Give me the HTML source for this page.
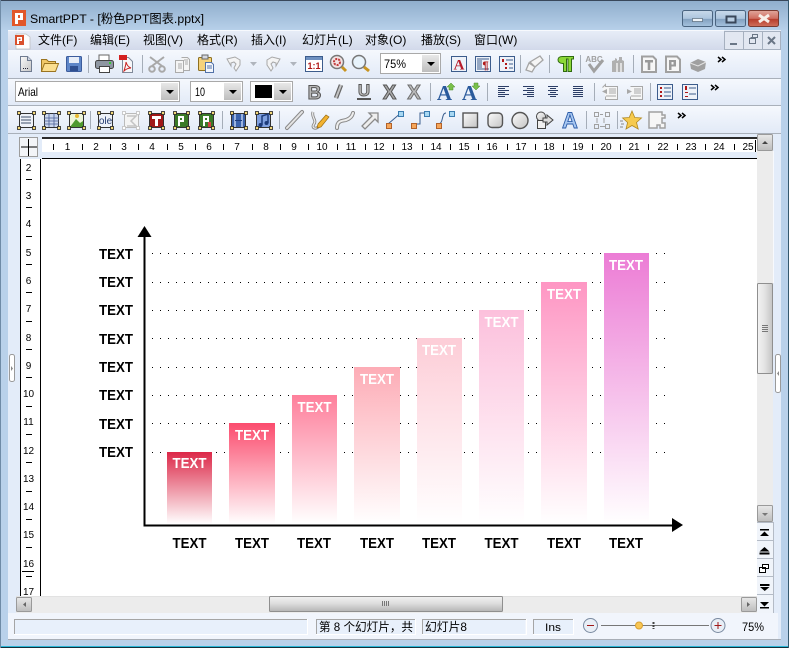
<!DOCTYPE html>
<html><head><meta charset="utf-8"><title>SmartPPT</title>
<style>
html,body{margin:0;padding:0;background:#b9d1ea;overflow:hidden}
svg{display:block}
text{font-family:"Liberation Sans","Noto Sans CJK SC",sans-serif;fill:#000}
.m{font-size:12px}
.r{font-size:10px;text-anchor:middle}
.t{font-size:14.4px;font-weight:bold;text-anchor:middle}
.w{fill:#fff}
</style></head><body>
<svg width="789" height="648" viewBox="0 0 789 648" xmlns="http://www.w3.org/2000/svg">
<defs>
<linearGradient id="tb" x1="0" y1="0" x2="0" y2="1"><stop offset="0" stop-color="#8fadcb"/><stop offset="1" stop-color="#b7d0e9"/></linearGradient>
<linearGradient id="mn" x1="0" y1="0" x2="0" y2="1"><stop offset="0" stop-color="#e8eef8"/><stop offset="1" stop-color="#d2d9ea"/></linearGradient>
<linearGradient id="tl" x1="0" y1="0" x2="0" y2="1"><stop offset="0" stop-color="#f5f8fd"/><stop offset="1" stop-color="#e2eaf7"/></linearGradient>
<linearGradient id="wb" x1="0" y1="0" x2="0" y2="1"><stop offset="0" stop-color="#c8d9ea"/><stop offset=".5" stop-color="#adc5de"/><stop offset=".55" stop-color="#83a1c0"/><stop offset="1" stop-color="#a6c3df"/></linearGradient>
<linearGradient id="wc" x1="0" y1="0" x2="0" y2="1"><stop offset="0" stop-color="#e0a79c"/><stop offset=".5" stop-color="#cf6d5f"/><stop offset=".55" stop-color="#b73d2c"/><stop offset="1" stop-color="#d0705c"/></linearGradient>
<linearGradient id="cb" x1="0" y1="0" x2="0" y2="1"><stop offset="0" stop-color="#e8e8e8"/><stop offset="1" stop-color="#bdbdbd"/></linearGradient>
<linearGradient id="gs" x1="0" y1="0" x2="1" y2="1"><stop offset="0" stop-color="#fbfbfb"/><stop offset="1" stop-color="#c4c4c4"/></linearGradient>
<linearGradient id="th" x1="0" y1="0" x2="1" y2="0"><stop offset="0" stop-color="#f3f3f3"/><stop offset=".5" stop-color="#e2e2e2"/><stop offset="1" stop-color="#c4c4c4"/></linearGradient>
<linearGradient id="hh" x1="0" y1="0" x2="0" y2="1"><stop offset="0" stop-color="#f2f2f2"/><stop offset=".45" stop-color="#dedede"/><stop offset="1" stop-color="#b5b5b5"/></linearGradient>
<linearGradient id="b1" x1="0" y1="0" x2="0" y2="1"><stop offset="0" stop-color="#dc2848"/><stop offset="1" stop-color="#fff"/></linearGradient>
<linearGradient id="b2" x1="0" y1="0" x2="0" y2="1"><stop offset="0" stop-color="#fb4c6e"/><stop offset="1" stop-color="#fff"/></linearGradient>
<linearGradient id="b3" x1="0" y1="0" x2="0" y2="1"><stop offset="0" stop-color="#fe7f9b"/><stop offset="1" stop-color="#fff"/></linearGradient>
<linearGradient id="b4" x1="0" y1="0" x2="0" y2="1"><stop offset="0" stop-color="#fdacb6"/><stop offset="1" stop-color="#fff"/></linearGradient>
<linearGradient id="b5" x1="0" y1="0" x2="0" y2="1"><stop offset="0" stop-color="#fdcdd7"/><stop offset="1" stop-color="#fff"/></linearGradient>
<linearGradient id="b6" x1="0" y1="0" x2="0" y2="1"><stop offset="0" stop-color="#fcc0dc"/><stop offset="1" stop-color="#fff"/></linearGradient>
<linearGradient id="b7" x1="0" y1="0" x2="0" y2="1"><stop offset="0" stop-color="#fe96c3"/><stop offset="1" stop-color="#fff"/></linearGradient>
<linearGradient id="b8" x1="0" y1="0" x2="0" y2="1"><stop offset="0" stop-color="#ec7cd5"/><stop offset="1" stop-color="#fff"/></linearGradient>
</defs>

<!-- window frame -->
<rect width="789" height="648" fill="#b9d1ea"/>
<rect width="789" height="30" fill="url(#tb)"/>
<rect width="789" height="1" fill="#39475a"/>
<rect y="646" width="789" height="1" fill="#29b6d6"/>
<rect y="647" width="789" height="1" fill="#12303c"/>
<rect x="788" width="1" height="648" fill="#34586e"/>
<rect x="0" width="1" height="648" fill="#6f8ba6"/>
<rect x="8" y="30" width="773" height="610" fill="#e3ecf9"/>

<!-- title -->
<rect x="12" y="10" width="14" height="16" fill="#e1572a"/>
<path d="M15 13h8v7h-5v4h-3zM18 15v3h2v-3z" fill="#fff" fill-rule="evenodd"/>
<text x="30" y="23" style="font-size:12.3px" fill="#111">SmartPPT - [粉色PPT图表.pptx]</text>
<g stroke="#4a6480">
<rect x="682.500" y="10.500" width="30" height="16" rx="2" fill="url(#wb)"/>
<rect x="715.500" y="10.500" width="30" height="16" rx="2" fill="url(#wb)"/>
<rect x="748.500" y="10.500" width="30" height="16" rx="2" fill="url(#wc)" stroke="#7a3a30"/>
</g>
<rect x="692.500" y="18.500" width="10" height="3" fill="#eef3f8" stroke="#4a5a6a" stroke-width=".6"/>
<rect x="726.500" y="16.500" width="9" height="6" fill="#b9cee2" stroke="#39475a" stroke-width="2"/>
<path d="M759 15l10 7M769 15l-10 7" stroke="#f7efe9" stroke-width="3"/>

<!-- menu -->
<rect x="8" y="30" width="773" height="20" fill="url(#mn)"/>
<rect x="8" y="30" width="716" height="1" fill="#f7f9fd"/>
<path d="M16 34h10l4 3v12h-14z" fill="#fdfdfd" stroke="#bbb" stroke-width=".7"/>
<rect x="15" y="35" width="9" height="10" fill="#d9502c"/>
<path d="M17 37h5v4h-3v3h-2zM18.500 38.500v1.500h2v-1.500z" fill="#fff" fill-rule="evenodd"/>
<text class="m" x="38" y="44">文件(F)</text>
<text class="m" x="90" y="44">编辑(E)</text>
<text class="m" x="143" y="44">视图(V)</text>
<text class="m" x="197" y="44">格式(R)</text>
<text class="m" x="251" y="44">插入(I)</text>
<text class="m" x="302" y="44">幻灯片(L)</text>
<text class="m" x="365" y="44">对象(O)</text>
<text class="m" x="421" y="44">播放(S)</text>
<text class="m" x="474" y="44">窗口(W)</text>
<g stroke="#a6b0bf" fill="#e2e7f1">
<rect x="724.500" y="31.500" width="19" height="18"/><rect x="743.500" y="31.500" width="19" height="18"/><rect x="762.500" y="31.500" width="18" height="18"/>
</g>
<path d="M730 44h7" stroke="#6a7686" stroke-width="2"/>
<path d="M750.500 37.500h7v-3h-5v3M749.500 38.500h6v5h-6z" fill="none" stroke="#6a7686"/>
<path d="M768 37l7 7M775 37l-7 7" stroke="#6a7686" stroke-width="2"/>

<!-- toolbars -->
<rect x="8" y="50" width="773" height="28" fill="url(#tl)"/>
<rect x="8" y="78" width="773" height="1" fill="#a9b0ba"/>
<rect x="8" y="79" width="773" height="26" fill="url(#tl)"/>
<rect x="8" y="105" width="773" height="1" fill="#a9b0ba"/>
<rect x="8" y="106" width="773" height="27" fill="url(#tl)"/>
<rect x="8" y="133" width="773" height="1" fill="#a9b0ba"/>

<!-- separators -->
<path d="M88.500 55v18M142.500 55v18M520.500 55v18M549.500 55v18M580.500 55v18M633.500 55v18M430.500 83v18M487.500 83v18M594.500 83v18M650.500 83v18M90.500 111v18M222.500 111v18M279.500 111v18M586.500 111v18M617.500 111v18" stroke="#a5adb8"/>

<!-- toolbar 1 icons -->
<path d="M20.500 56.500h7l4 4v11h-11z" fill="url(#gs)" stroke="#6f7b90"/><path d="M27.500 56.500v4h4" fill="#cfd6e3" stroke="#6f7b90"/><path d="M23 68.500h6" stroke="#223" stroke-dasharray="1 1"/>
<path d="M41.500 71.500v-12h5l2 2h7v2" fill="#f0c868" stroke="#9a7420"/><path d="M41.500 71.500l3-8h14l-3 8z" fill="#fbdf90" stroke="#9a7420"/>
<rect x="66.500" y="56.500" width="15" height="15" rx="1" fill="#5e86c8" stroke="#3c5c9c"/><rect x="69" y="57" width="10" height="6" fill="#e8eef8"/><rect x="70" y="66" width="8" height="5" fill="#2f4f90"/>
<rect x="99" y="55" width="10" height="6" fill="#fff" stroke="#666"/><rect x="95.500" y="60.500" width="18" height="8" rx="2" fill="#8f97a2" stroke="#444"/><rect x="99.500" y="66.500" width="10" height="6" fill="#fff" stroke="#444"/><rect x="109" y="62" width="2" height="2" fill="#3c3"/>
<path d="M122.500 57.500h6l4 4v11h-10z" fill="#f7f7f9" stroke="#808a9a"/><path d="M119 55h8v5h-8z" fill="#d42020"/><path d="M124 71c1-4 2-6 2-9c1 3 2 5 5 6c-3 0-5 1-7 3z" fill="none" stroke="#c82020"/>
<g fill="none" stroke="#a8a8a8" stroke-width="2"><path d="M150 57l12 9M164 57l-12 9"/><circle cx="152" cy="69" r="2.800"/><circle cx="162" cy="69" r="2.800"/></g>
<path d="M181.500 57.500h6l2 2v11h-7" fill="#f4f4f4" stroke="#ababab"/><path d="M175.500 60.500h8v12h-8z" fill="#f4f4f4" stroke="#ababab"/><path d="M178 64h4M178 66h4M178 68h4M184 60h4M185 62h3M185 64h3" stroke="#aaa"/>
<rect x="198.500" y="57.500" width="13" height="13" rx="1" fill="#f5d27c" stroke="#8e7020"/><rect x="202" y="55" width="6" height="4" fill="#d5d8df" stroke="#666"/><path d="M205.500 62.500h6l2 2v8h-8z" fill="#f4f7fc" stroke="#5272a8"/><path d="M207 66h5M207 68h5" stroke="#5272a8"/>
<path d="M227 59l8-2 5 3v5l-4 6-2-3 2-4-2-2-3 1v3z" fill="#f4f4f4" stroke="#a8a8a8"/><path d="M250 62h7l-3.500 4z" fill="#b0b5bd"/>
<path d="M280 59l-8-2-5 3v5l4 6 2-3-2-4 2-2 3 1v3z" fill="#f4f4f4" stroke="#a8a8a8"/><path d="M290 62h7l-3.500 4z" fill="#b0b5bd"/>
<rect x="305.500" y="56.500" width="17" height="15" fill="#fff" stroke="#3c5c8c"/><rect x="306" y="57" width="16" height="3" fill="#6e90c0"/><text x="314" y="69" style="font-size:9px;font-weight:bold;text-anchor:middle;fill:#b01818">1:1</text>
<circle cx="337" cy="62" r="6.500" fill="#f4e4e4" stroke="#777" stroke-width="1.500"/><circle cx="337" cy="62" r="3" fill="none" stroke="#c03a3a" stroke-width="2" stroke-dasharray="2 1"/><path d="M342 67l4 4" stroke="#c89420" stroke-width="3"/>
<circle cx="359" cy="62" r="6.500" fill="#e8f3fb" stroke="#777" stroke-width="1.500"/><path d="M364 67l5 4" stroke="#c89420" stroke-width="3"/>
<rect x="380.500" y="53.500" width="60" height="20" fill="#fff" stroke="#a9a9a9"/><rect x="422" y="55" width="17" height="17" fill="url(#cb)"/><path d="M427 62h8l-4 4z"/>
<text x="384" y="68" textLength="22" lengthAdjust="spacingAndGlyphs" style="font-size:12px">75%</text>
<rect x="451.500" y="56.500" width="15" height="15" fill="#eef2f9" stroke="#3c5c8c"/><text x="459" y="69.500" style="font-size:15px;font-weight:bold;font-family:'Liberation Serif',serif;text-anchor:middle;fill:#b71c2c">A</text>
<rect x="475.500" y="56.500" width="15" height="15" fill="#eef2f9" stroke="#3c5c8c"/><path d="M477 59h12M477 61h5M477 63h5M477 65h5M477 67h5M477 69h12" stroke="#3c5c8c"/><text x="485.500" y="69" style="font-size:11px;font-weight:bold;text-anchor:middle;fill:#b01818">¶</text>
<rect x="499.500" y="56.500" width="15" height="15" fill="#eef2f9" stroke="#3c5c8c"/><path d="M502 59h2v3h-2zM505 63h2v2h-2zM505 67h2v2h-2z" fill="#b01818"/><path d="M506 60h7M509 64h4M509 68h4" stroke="#3c5c8c"/>
<path d="M526 70l3-7 6 4-3 5zM530 62l10-6 3 4-8 7z" fill="#f5f5f5" stroke="#a5a5a5" stroke-width="1.300"/>
<path d="M563.500 71.500V63.500h-1c-3 0-4.500-2-4.500-3.800S559.500 56.500 562.500 56.500h11v2.500h-2v12.500h-3.500V59h-1.500v12.500z" fill="#8cd838" stroke="#2f6a10"/>
<text x="594" y="62" style="font-size:8px;font-weight:bold;text-anchor:middle;fill:#a0a0a0">ABC</text><path d="M589 64l5 7 9-11" fill="none" stroke="#a0a0a0" stroke-width="3"/>
<path d="M612 72v-11l3-1v-2l2 1v2l2-1 0-3 3 0v3l2 1v11z" fill="#b0b0b0"/><path d="M617 63v9M621 63v9" stroke="#fff" stroke-width="1.200"/>
<path d="M642 56.500h11l3 3v12.500h-14z" fill="#f6f6f6" stroke="#a0a0a0" stroke-width="2"/><path d="M645 60h8v2.500h-2.700v7.500h-2.600v-7.500h-2.700z" fill="#999"/>
<path d="M666 56.500h11l3 3v12.500h-14z" fill="#f6f6f6" stroke="#a0a0a0" stroke-width="2"/><path d="M669 60h7v6.500h-4.500v3.500h-2.500zM671.500 62v2.500h2v-2.500z" fill="#999" fill-rule="evenodd"/>
<path d="M690 63l8-4 8 3-1 7-7 3-7-3z" fill="#a0a0a0"/><path d="M690 63l8 3 8-4" fill="none" stroke="#e4e4e4"/>
<path d="M718 57l3 2.500-3 2.500M722 57l3 2.500-3 2.500" fill="none" stroke="#000" stroke-width="1.500"/>

<!-- toolbar 2 -->
<rect x="15.500" y="81.500" width="164" height="20" fill="#fff" stroke="#a9a9a9"/><rect x="161" y="83" width="17" height="17" fill="url(#cb)"/><path d="M166 90h8l-4 4z"/>
<text x="18" y="96" textLength="20" lengthAdjust="spacingAndGlyphs" style="font-size:12px">Arial</text>
<rect x="190.500" y="81.500" width="52" height="20" fill="#fff" stroke="#a9a9a9"/><rect x="224" y="83" width="17" height="17" fill="url(#cb)"/><path d="M229 90h8l-4 4z"/>
<text x="195" y="96" textLength="10" lengthAdjust="spacingAndGlyphs" style="font-size:12px">10</text>
<rect x="250.500" y="81.500" width="42" height="20" fill="#fff" stroke="#a9a9a9"/><rect x="255" y="85" width="17" height="13"/><rect x="274" y="83" width="17" height="17" fill="url(#cb)"/><path d="M279 90h8l-4 4z"/>
<text x="314.500" y="99" style="font-size:19px;font-weight:bold;text-anchor:middle;fill:#b9b9b9;stroke:#555;stroke-width:1">B</text>
<path d="M336 98l5-13" stroke="#666" stroke-width="4.500"/><path d="M336 98l5-13" stroke="#c4c4c4" stroke-width="2"/>
<text x="364" y="96" style="font-size:17px;font-weight:bold;text-anchor:middle;fill:#bbb;stroke:#555;stroke-width:.9">U</text><rect x="357" y="98" width="14" height="2" fill="#555"/>
<text x="389.500" y="99" style="font-size:20px;font-weight:bold;text-anchor:middle;fill:#a8a8a8;stroke:#555;stroke-width:1">X</text>
<text x="414" y="99" style="font-size:20px;font-weight:bold;text-anchor:middle;fill:#bcbcbc;stroke:#6f6f6f;stroke-width:1">X</text>
<text x="444.500" y="100" style="font-size:21px;font-weight:bold;font-family:'Liberation Serif',serif;text-anchor:middle;fill:#2a5a9c">A</text><path d="M449 89v-2h-2l4-4 4 4h-2v3h-4z" fill="#7ac04a" stroke="#4a8a2a" stroke-width=".5"/>
<text x="469.500" y="100" style="font-size:21px;font-weight:bold;font-family:'Liberation Serif',serif;text-anchor:middle;fill:#2a5a9c">A</text><path d="M474 83h4v3h2l-4 4-4-4h2z" fill="#7ac04a" stroke="#4a8a2a" stroke-width=".5"/>
<g stroke="#2c3e66"><path d="M498 86.500h11M498 88.500h7M498 90.500h11M498 92.500h7M498 94.500h11M498 96.500h7"/><path d="M523 86.500h11M527 88.500h7M523 90.500h11M527 92.500h7M523 94.500h11M527 96.500h7"/><path d="M548 86.500h10M550 88.500h6M548 90.500h10M550 92.500h6M548 94.500h10M550 96.500h6"/><path d="M573 86.500h10M573 88.500h10M573 90.500h10M573 92.500h10M573 94.500h10M573 96.500h10"/></g>
<path d="M602.500 87.500l3-3 0 2h12v13h-12v-3" fill="#f6f6f6" stroke="#a8a8a8"/><path d="M607 89l-5 2.500 5 2.500z" fill="#a8a8a8"/><path d="M609 89h7M609 91h7M609 93h7M606 96h10" stroke="#a8a8a8"/>
<path d="M630.500 86.500h12v13h-12v-3" fill="#f6f6f6" stroke="#a8a8a8"/><path d="M627 89l5 2.500-5 2.500z" fill="#a8a8a8"/><path d="M634 89h7M634 91h7M634 93h7M631 96h10" stroke="#a8a8a8"/>
<rect x="657.500" y="84.500" width="15" height="15" fill="#eef2f9" stroke="#3c5c8c"/><path d="M660 87h2v2h-2zM660 91h2v2h-2zM660 95h2v2h-2z" fill="#b01818"/><path d="M664 88h7M664 92h7M664 96h7" stroke="#3c5c8c"/>
<rect x="682.500" y="84.500" width="15" height="15" fill="#eef2f9" stroke="#3c5c8c"/><path d="M685 86h2v4h-2zM685 92h3v1h-3v3h3v1h-3z" fill="#b01818"/><path d="M689 88h7M689 94h7" stroke="#3c5c8c"/>
<path d="M711 85l3 2.500-3 2.500M715 85l3 2.500-3 2.500" fill="none" stroke="#000" stroke-width="1.500"/>

<!-- toolbar 3 -->
<g fill="#fff" stroke="#333">
<rect x="19.500" y="113.500" width="14" height="14" fill="#eef2f9"/>
<rect x="44.500" y="113.500" width="14" height="14" fill="#cad6ec"/>
<rect x="69.500" y="113.500" width="14" height="14" fill="#eef5d8"/>
<rect x="98.500" y="113.500" width="14" height="14" fill="#eef2f9"/>
<rect x="124.500" y="113.500" width="14" height="14" fill="#f4f4f4" stroke="#bbb"/>
<rect x="149.500" y="113.500" width="14" height="14" fill="#a01818"/>
<rect x="174.500" y="113.500" width="14" height="14" fill="#3a7a28"/>
<rect x="199.500" y="113.500" width="14" height="14" fill="#eef2e0"/>
<rect x="231.500" y="113.500" width="14" height="14" fill="#3a62ac"/>
<rect x="256.500" y="113.500" width="14" height="14" fill="#7fa0e0"/>
</g>
<path d="M21 117h10M21 120h10M21 123h10" stroke="#40506c"/>
<path d="M44 118h15M44 121h15M44 124h15M49 113v14M54 113v14" stroke="#4a5f96" stroke-width=".8"/>
<path d="M70 127l6-8 4 4 3-2v6z" fill="#4f9a2e"/><circle cx="77" cy="116" r="2" fill="#e8b830"/>
<text x="105.500" y="124" style="font-size:10px;text-anchor:middle;fill:#223a70">ole</text>
<path d="M127 116h9l-5 5 5 5h-9" fill="none" stroke="#c4c4c4" stroke-width="1.500"/>
<path d="M152 116h9v3h-3v7h-3v-7h-3z" fill="#fff"/>
<path d="M178 116h6v6h-4v4h-2zM180 118v2h2v-2z" fill="#fff" fill-rule="evenodd"/>
<rect x="200" y="114" width="13" height="13" fill="#3a7a28"/><path d="M203 116h6v6h-4v4h-2zM205 118v2h2v-2z" fill="#fff" fill-rule="evenodd"/><rect x="208" y="122" width="3" height="5" fill="#d04040"/>
<path d="M235 114v13M242 114v13" stroke="#bcd0f0" stroke-width="1.500"/><path d="M235 120.500h7" stroke="#1c3a7a"/>
<path d="M262 125v-9l6-2v9" fill="none" stroke="#1c3a7a" stroke-width="1.500"/><circle cx="260.500" cy="125" r="2" fill="#1c3a7a"/><circle cx="266.500" cy="123" r="2" fill="#1c3a7a"/>
<g fill="#f3d878" stroke="#222" stroke-width=".8">
<rect x="17.500" y="111.500" width="3" height="3"/><rect x="32.500" y="111.500" width="3" height="3"/><rect x="17.500" y="126.500" width="3" height="3"/><rect x="32.500" y="126.500" width="3" height="3"/>
<rect x="42.500" y="111.500" width="3" height="3"/><rect x="57.500" y="111.500" width="3" height="3"/><rect x="42.500" y="126.500" width="3" height="3"/><rect x="57.500" y="126.500" width="3" height="3"/>
<rect x="67.500" y="111.500" width="3" height="3"/><rect x="82.500" y="111.500" width="3" height="3"/><rect x="67.500" y="126.500" width="3" height="3"/><rect x="82.500" y="126.500" width="3" height="3"/>
<rect x="97.500" y="111.500" width="3" height="3"/><rect x="110.500" y="111.500" width="3" height="3"/><rect x="97.500" y="126.500" width="3" height="3"/><rect x="110.500" y="126.500" width="3" height="3"/>
<rect x="148.500" y="111.500" width="3" height="3"/><rect x="161.500" y="111.500" width="3" height="3"/><rect x="148.500" y="126.500" width="3" height="3"/><rect x="161.500" y="126.500" width="3" height="3"/>
<rect x="173.500" y="111.500" width="3" height="3"/><rect x="186.500" y="111.500" width="3" height="3"/><rect x="173.500" y="126.500" width="3" height="3"/><rect x="186.500" y="126.500" width="3" height="3"/>
<rect x="198.500" y="111.500" width="3" height="3"/><rect x="211.500" y="111.500" width="3" height="3"/><rect x="198.500" y="126.500" width="3" height="3"/><rect x="211.500" y="126.500" width="3" height="3"/>
<rect x="230.500" y="111.500" width="3" height="3"/><rect x="244.500" y="111.500" width="3" height="3"/><rect x="230.500" y="126.500" width="3" height="3"/><rect x="244.500" y="126.500" width="3" height="3"/>
<rect x="255.500" y="111.500" width="3" height="3"/><rect x="269.500" y="111.500" width="3" height="3"/><rect x="255.500" y="126.500" width="3" height="3"/><rect x="269.500" y="126.500" width="3" height="3"/>
</g>
<g fill="#fff" stroke="#c0c0c0" stroke-width=".8"><rect x="122.500" y="111.500" width="3" height="3"/><rect x="136.500" y="111.500" width="3" height="3"/><rect x="122.500" y="126.500" width="3" height="3"/><rect x="136.500" y="126.500" width="3" height="3"/></g>
<path d="M287 128l15-16" stroke="#8a8a8a" stroke-width="4" stroke-linecap="round"/><path d="M287 128l15-16" stroke="#e4e4e4" stroke-width="2" stroke-linecap="round"/>
<path d="M313 112c-2 5 4 8 1 12s2 6 5 2" fill="none" stroke="#8a8a8a" stroke-width="3"/><path d="M313 112c-2 5 4 8 1 12s2 6 5 2" fill="none" stroke="#eee" stroke-width="1.200"/><path d="M318 124l8-9 3 2-8 10-4 1z" fill="#f2b230" stroke="#9a6c10" stroke-width=".7"/>
<path d="M337 128c0-8 6-7 9-8s6-3 7-7" fill="none" stroke="#8a8a8a" stroke-width="4" stroke-linecap="round"/><path d="M337 128c0-8 6-7 9-8s6-3 7-7" fill="none" stroke="#eee" stroke-width="2" stroke-linecap="round"/>
<path d="M369 113h9v9l-3-3-10 10-3-3 10-10z" fill="#eee" stroke="#8a8a8a" stroke-width="1.300"/>
<g stroke="#3b5f8f"><path d="M388 124l14-12" fill="none"/><path d="M413 124h7v-11h6M438 124c6 0 3-11 8-11" fill="none"/></g>
<g stroke="#b2622a" fill="#f6a65a"><rect x="386.500" y="123.500" width="5" height="5"/><rect x="411.500" y="123.500" width="5" height="5"/><rect x="436.500" y="123.500" width="5" height="5"/></g>
<g stroke="#3a7cb0" fill="#a8d8f2"><rect x="398.500" y="111.500" width="5" height="5"/><rect x="424.500" y="111.500" width="5" height="5"/><rect x="449.500" y="111.500" width="5" height="5"/></g>
<rect x="463" y="113" width="14.500" height="14.500" fill="url(#gs)" stroke="#555" stroke-width="1.400"/>
<rect x="488" y="113" width="14.500" height="14.500" rx="4" fill="url(#gs)" stroke="#555" stroke-width="1.400"/>
<circle cx="520" cy="120.500" r="8" fill="url(#gs)" stroke="#555" stroke-width="1.400"/>
<circle cx="541" cy="116.500" r="4.500" fill="url(#gs)" stroke="#444"/><rect x="537.500" y="120.500" width="8" height="8" fill="#f0f0f0" stroke="#444"/><path d="M547 115l6 5-6 5v-3h-4v-4h4z" fill="#ddd" stroke="#444"/>
<text x="570" y="128" style="font-size:22px;font-weight:bold;text-anchor:middle;fill:#a8c8f2;stroke:#2c5ca8;stroke-width:.9">A</text>
<g fill="none" stroke="#a0a0a0"><rect x="594.500" y="112.500" width="4" height="4"/><rect x="605.500" y="112.500" width="4" height="4"/><rect x="594.500" y="124.500" width="4" height="4"/><rect x="605.500" y="124.500" width="4" height="4"/><path d="M597 118v5M600 126.500h5M600 114.500h3M604 118v5"/></g>
<path d="M632 111l2.800 6.500 6.700.5-5 4.500 1.700 6.500-6.200-3.500-6 3.500 1.600-6.500-5-4.500 6.600-.5z" fill="#f6ca4e" stroke="#b08820" stroke-width=".8"/><path d="M623 121h-3M624 124h-3M623 127h-3" stroke="#888"/>
<path d="M649 112h13v3l3 0v3l-3 0v5l3 0v5h-5v-3h-3v3h-8z" fill="#f6f6f6" stroke="#a0a0a0" stroke-width="1.500"/>
<path d="M678 113l3 2.500-3 2.500M682 113l3 2.500-3 2.500" fill="none" stroke="#000" stroke-width="1.500"/>

<!-- ruler h -->
<rect x="8" y="134" width="773" height="25" fill="#e3ecf9"/>
<rect x="19.500" y="137.500" width="18" height="19" fill="#f2f4f8" stroke="#9d9d9d"/>
<path d="M21 147h16M28.500 139v17" stroke="#000"/>
<rect x="42" y="138" width="715" height="14" fill="#fff"/>
<rect x="42" y="137" width="715" height="2" fill="#2b2b2b"/>
<rect x="42" y="158" width="715" height="1" fill="#000"/>
<path d="M53.500 144v6M82.500 144v6M110.500 144v6M138.500 144v6M167.500 144v6M195.500 144v6M223.500 144v6M252.500 144v6M280.500 144v6M308.500 144v6M337.500 144v6M365.500 144v6M393.500 144v6M422.500 144v6M450.500 144v6M478.500 144v6M507.500 144v6M535.500 144v6M563.500 144v6M592.500 144v6M620.500 144v6M648.500 144v6M677.500 144v6M705.500 144v6M734.500 144v6M755.500 140v12" stroke="#000"/>
<g><text class="r" x="67.500" y="150">1</text><text class="r" x="96" y="150">2</text><text class="r" x="124" y="150">3</text><text class="r" x="152" y="150">4</text><text class="r" x="181" y="150">5</text><text class="r" x="209" y="150">6</text><text class="r" x="237" y="150">7</text><text class="r" x="266" y="150">8</text><text class="r" x="294" y="150">9</text><text class="r" x="322" y="150">10</text><text class="r" x="351" y="150">11</text><text class="r" x="379" y="150">12</text><text class="r" x="407" y="150">13</text><text class="r" x="436" y="150">14</text><text class="r" x="464" y="150">15</text><text class="r" x="492" y="150">16</text><text class="r" x="521" y="150">17</text><text class="r" x="549" y="150">18</text><text class="r" x="578" y="150">19</text><text class="r" x="606" y="150">20</text><text class="r" x="634" y="150">21</text><text class="r" x="663" y="150">22</text><text class="r" x="691" y="150">23</text><text class="r" x="719" y="150">24</text><text class="r" x="748" y="150">25</text></g>

<!-- ruler v -->
<rect x="20" y="159" width="21" height="437" fill="#fff"/>
<rect x="20" y="159" width="1" height="437" fill="#000"/>
<rect x="40" y="159" width="1" height="437" fill="#000"/>
<path d="M26 179.500h6M26 207.500h6M26 236.500h6M26 264.500h6M26 292.500h6M26 321.500h6M26 349.500h6M26 377.500h6M26 406.500h6M26 434.500h6M26 462.500h6M26 491.500h6M26 519.500h6M26 547.500h6M26 576.500h6M22 571.500h12" stroke="#000"/>
<text class="r" x="28.500" y="171">2</text><text class="r" x="28.500" y="199">3</text><text class="r" x="28.500" y="227">4</text><text class="r" x="28.500" y="256">5</text><text class="r" x="28.500" y="284">6</text><text class="r" x="28.500" y="312">7</text><text class="r" x="28.500" y="341">8</text><text class="r" x="28.500" y="369">9</text><text class="r" x="28.500" y="397">10</text><text class="r" x="28.500" y="425">11</text><text class="r" x="28.500" y="454">12</text><text class="r" x="28.500" y="482">13</text><text class="r" x="28.500" y="510">14</text><text class="r" x="28.500" y="538">15</text><text class="r" x="28.500" y="567">16</text><text class="r" x="28.500" y="595">17</text>

<!-- canvas -->
<rect x="41" y="159" width="716" height="437" fill="#fff"/>
<!-- dots -->
<g fill="none" stroke="#000" stroke-dasharray="1 7">
<path d="M152 253.500H666M152 282.500H666M152 310.500H666M152 338.500H666M152 367.500H666M152 395.500H666M152 423.500H666M152 452.500H666"/>
</g>
<!-- bars -->
<rect x="167" y="452" width="45" height="72" fill="url(#b1)"/>
<rect x="229" y="423" width="46" height="101" fill="url(#b2)"/>
<rect x="292" y="395" width="45" height="129" fill="url(#b3)"/>
<rect x="354" y="367" width="46" height="157" fill="url(#b4)"/>
<rect x="417" y="338" width="45" height="186" fill="url(#b5)"/>
<rect x="479" y="310" width="45" height="214" fill="url(#b6)"/>
<rect x="541" y="282" width="46" height="242" fill="url(#b7)"/>
<rect x="604" y="253" width="45" height="271" fill="url(#b8)"/>
<g textLength="34">
<text class="t w" x="189.500" y="468" textLength="34" lengthAdjust="spacingAndGlyphs">TEXT</text>
<text class="t w" x="252" y="440" textLength="34" lengthAdjust="spacingAndGlyphs">TEXT</text>
<text class="t w" x="314.500" y="412" textLength="34" lengthAdjust="spacingAndGlyphs">TEXT</text>
<text class="t w" x="377" y="384" textLength="34" lengthAdjust="spacingAndGlyphs">TEXT</text>
<text class="t w" x="439" y="355" textLength="34" lengthAdjust="spacingAndGlyphs">TEXT</text>
<text class="t w" x="501.500" y="327" textLength="34" lengthAdjust="spacingAndGlyphs">TEXT</text>
<text class="t w" x="564" y="299" textLength="34" lengthAdjust="spacingAndGlyphs">TEXT</text>
<text class="t w" x="626" y="270" textLength="34" lengthAdjust="spacingAndGlyphs">TEXT</text>
</g>
<!-- axes -->
<path d="M144.500 236V525.500H673" fill="none" stroke="#000" stroke-width="2"/>
<path d="M144.500 226l7 11h-14z"/>
<path d="M683 525l-11 7v-14z"/>
<text class="t" x="116" y="259" textLength="34" lengthAdjust="spacingAndGlyphs">TEXT</text><text class="t" x="116" y="287" textLength="34" lengthAdjust="spacingAndGlyphs">TEXT</text><text class="t" x="116" y="315" textLength="34" lengthAdjust="spacingAndGlyphs">TEXT</text><text class="t" x="116" y="344" textLength="34" lengthAdjust="spacingAndGlyphs">TEXT</text><text class="t" x="116" y="372" textLength="34" lengthAdjust="spacingAndGlyphs">TEXT</text><text class="t" x="116" y="400" textLength="34" lengthAdjust="spacingAndGlyphs">TEXT</text><text class="t" x="116" y="429" textLength="34" lengthAdjust="spacingAndGlyphs">TEXT</text><text class="t" x="116" y="457" textLength="34" lengthAdjust="spacingAndGlyphs">TEXT</text>
<text class="t" x="189.500" y="548" textLength="34" lengthAdjust="spacingAndGlyphs">TEXT</text><text class="t" x="252" y="548" textLength="34" lengthAdjust="spacingAndGlyphs">TEXT</text><text class="t" x="314" y="548" textLength="34" lengthAdjust="spacingAndGlyphs">TEXT</text><text class="t" x="377" y="548" textLength="34" lengthAdjust="spacingAndGlyphs">TEXT</text><text class="t" x="439" y="548" textLength="34" lengthAdjust="spacingAndGlyphs">TEXT</text><text class="t" x="501.500" y="548" textLength="34" lengthAdjust="spacingAndGlyphs">TEXT</text><text class="t" x="564" y="548" textLength="34" lengthAdjust="spacingAndGlyphs">TEXT</text><text class="t" x="626" y="548" textLength="34" lengthAdjust="spacingAndGlyphs">TEXT</text>

<!-- vscroll -->
<rect x="757" y="134" width="16" height="388" fill="#ececec"/>
<rect x="773" y="151" width="1" height="132" fill="#f7f9fd"/>
<rect x="757.500" y="134.500" width="15" height="16" rx="1" fill="url(#cb)" stroke="#9a9a9a"/>
<path d="M762 144l3-3 3 3z" fill="#444"/>
<rect x="757.500" y="283.500" width="15" height="90" rx="1" fill="url(#th)" stroke="#8f8f8f"/>
<path d="M762 325.500h6M762 327.500h6M762 329.500h6M762 331.500h6" stroke="#777"/>
<rect x="757.500" y="505.500" width="15" height="16" rx="1" fill="url(#cb)" stroke="#9a9a9a"/>
<path d="M762 513h6l-3 3z" fill="#777"/>
<rect x="757" y="522" width="17" height="91" fill="#f0f4fa"/>
<path d="M757 522.500h17M757 540.500h17M757 558.500h17M757 576.500h17M757 594.500h17M773.500 522v91" stroke="#b4bbc6"/>
<path d="M760 529h9v1.500h-9zM764.500 531.500l4.500 4.500h-9z"/>
<path d="M764.500 547l5 4.500h-10zM759.500 552.500h10v2h-10z"/>
<path d="M762.500 564.500h6v4h-6zM759.500 567.500h6v5h-6z" fill="#fff" stroke="#000"/>
<path d="M760 584h9.500v2h-9.500zM760 587h9.500l-4.750 4z"/>
<path d="M760 602h9l-4.500 4.500zM760 607h9v1.500h-9z"/>

<!-- hscroll -->
<rect x="16" y="596" width="741" height="17" fill="#ececec"/>
<rect x="16" y="596" width="741" height="1" fill="#e2e2e2"/>
<rect x="16.500" y="597.500" width="15" height="14" rx="1" fill="url(#cb)" stroke="#9a9a9a"/>
<path d="M26 602v5l-3-2.500z" fill="#666"/>
<rect x="269.500" y="596.500" width="233" height="15" rx="1" fill="url(#hh)" stroke="#8f8f8f"/>
<path d="M382.500 601v5M384.500 601v5M386.500 601v5M388.500 601v5" stroke="#777"/>
<rect x="741.500" y="597.500" width="15" height="14" rx="1" fill="url(#cb)" stroke="#9a9a9a"/>
<path d="M747 602v5l3-2.500z" fill="#666"/>

<!-- status -->
<rect x="8" y="613" width="770" height="26" fill="#f1f5fc"/>
<rect x="8" y="639" width="773" height="1" fill="#a8aeb6"/>
<path d="M778 613h3v26h-3z" fill="#e3ecf9"/>
<rect x="15" y="620" width="292" height="14" fill="#e8f0fb"/><rect x="317" y="620" width="98" height="14" fill="#e8f0fb"/><rect x="423" y="620" width="102" height="14" fill="#e8f0fb"/><rect x="534" y="620" width="39" height="14" fill="#e8f0fb"/>
<g fill="none" stroke="#a5a5a5">
<path d="M14.500 634V619.500H307"/><path d="M316.500 634V619.500H415"/><path d="M422.500 634V619.500H526"/><path d="M533.500 634V619.500H573"/>
</g>
<g fill="none" stroke="#fff">
<path d="M14 634.500H307.500V619"/><path d="M316 634.500H415.500V619"/><path d="M422 634.500H526.500V619"/><path d="M533 634.500H573.500V619"/>
</g>
<text x="319" y="631" textLength="94" lengthAdjust="spacingAndGlyphs" style="font-size:12px">第 8 个幻灯片，共</text>
<text x="425" y="631" textLength="42" lengthAdjust="spacingAndGlyphs" style="font-size:12px">幻灯片8</text>
<text x="545" y="631" textLength="16" lengthAdjust="spacingAndGlyphs" style="font-size:11px">Ins</text>
<circle cx="590.500" cy="625.500" r="7" fill="#e8eef6" stroke="#7a8aa0"/><path d="M587 625.500h7" stroke="#a01818"/>
<path d="M601 625.500h108" stroke="#777"/>
<circle cx="639" cy="625.500" r="3.500" fill="#f8c654" stroke="#d8a030"/>
<path d="M653.500 622v7" stroke="#444" stroke-width="2" stroke-dasharray="2 1"/>
<circle cx="718" cy="625.500" r="7" fill="#e8eef6" stroke="#7a8aa0"/><path d="M714.500 625.500h7M718 622v7" stroke="#a01818"/>
<text x="742" y="631" textLength="22" lengthAdjust="spacingAndGlyphs" style="font-size:11.500px">75%</text>

<!-- side handles -->
<rect x="9.500" y="354.500" width="5" height="27" rx="2" fill="#fff" stroke="#9a9a9a"/>
<path d="M11 366v5l2-2.500z" fill="#888"/>
<rect x="775.500" y="354.500" width="5" height="38" rx="2" fill="#fff" stroke="#9a9a9a"/>
<path d="M779 371v5l-2-2.500z" fill="#888"/>
</svg>
</body></html>
